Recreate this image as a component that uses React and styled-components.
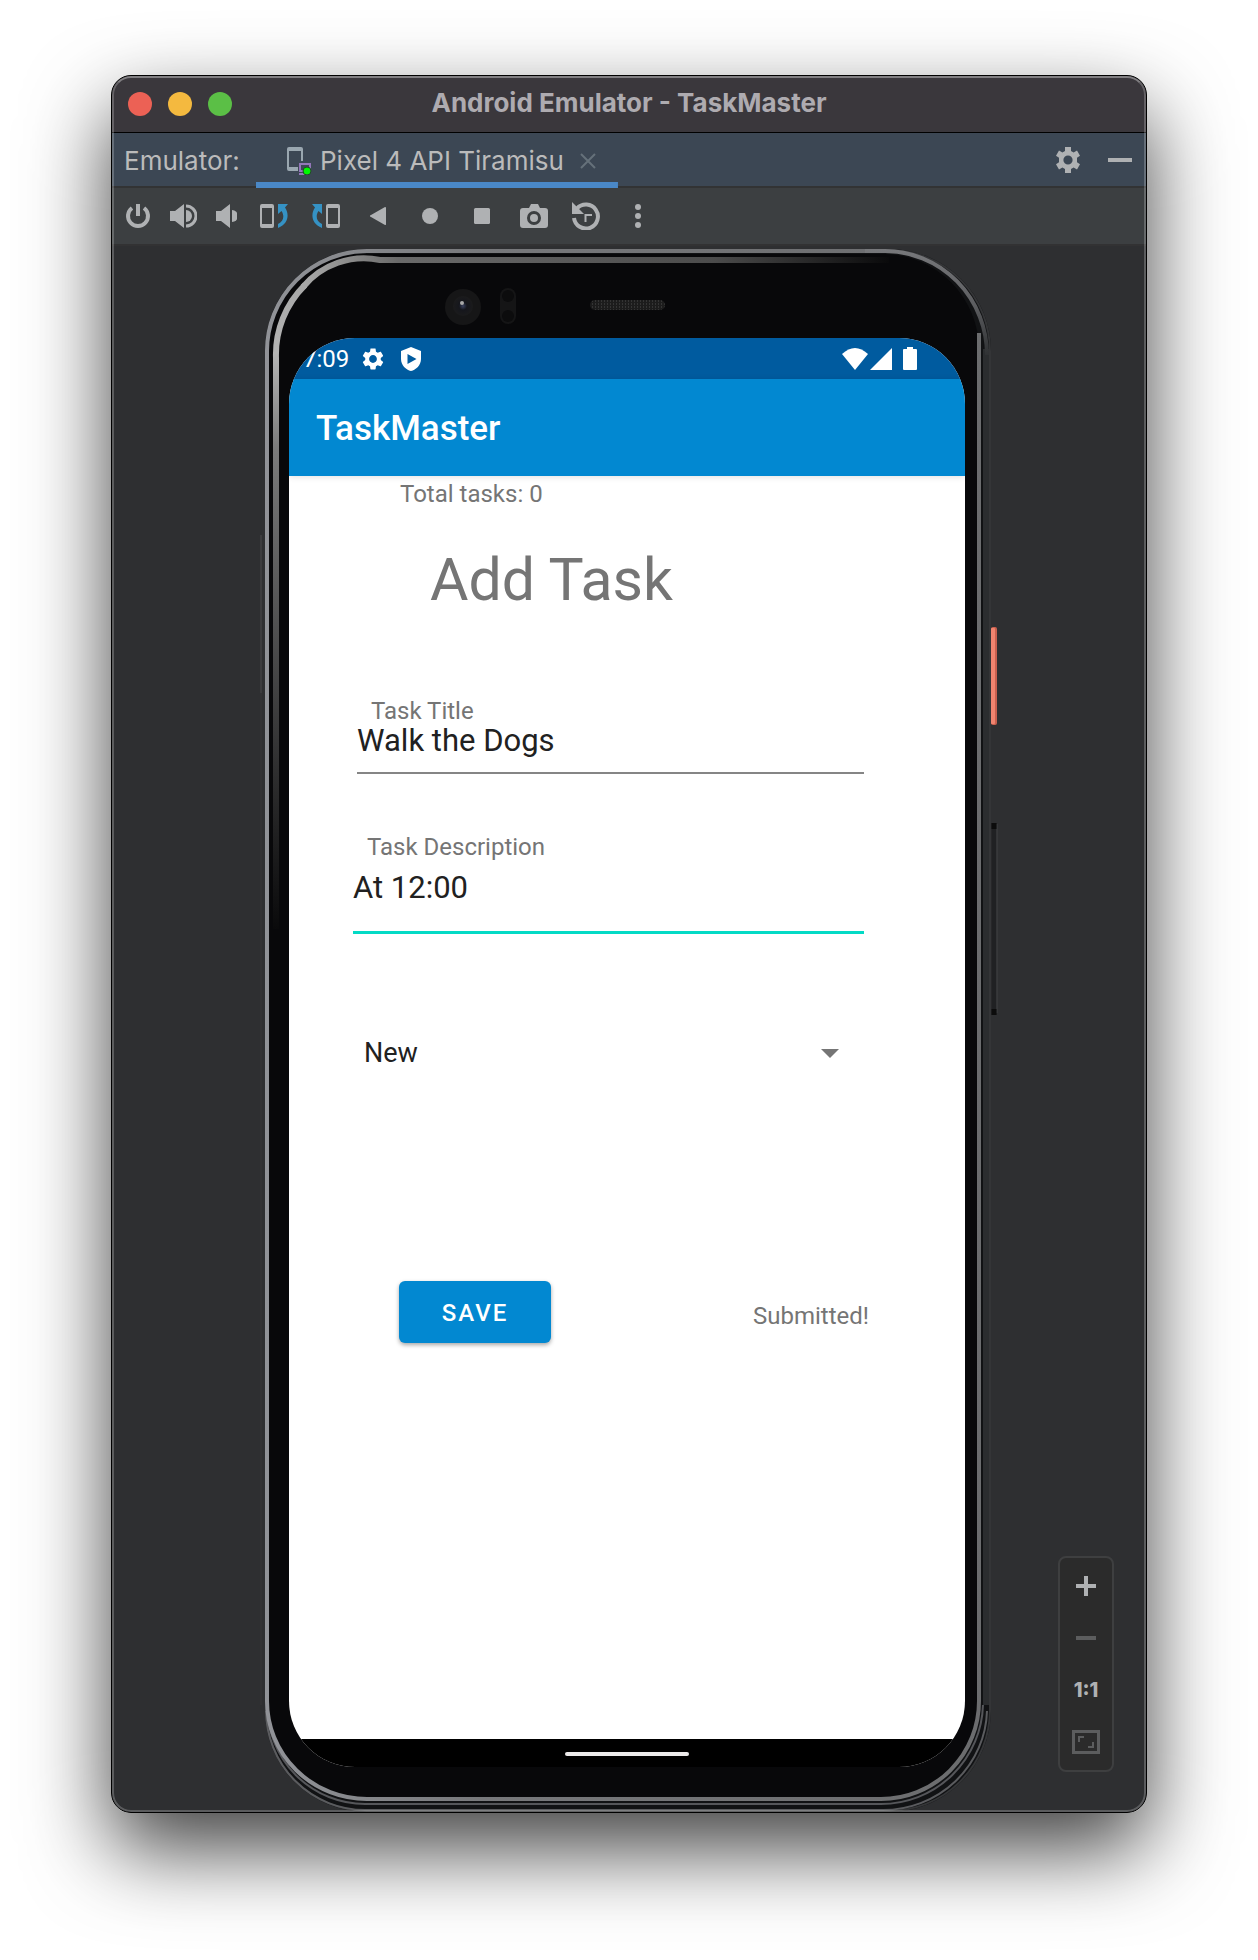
import React from "react";
import styled, { createGlobalStyle } from "styled-components";

const GlobalStyle = createGlobalStyle`
  *, *::before, *::after { box-sizing: border-box; }
  body { margin: 0; background: #fff; font-family: Inter, "Liberation Sans", sans-serif; }
  button, input, select { font: inherit; color: inherit; }
`;

const Desktop = styled.div`
  padding: 75px 111px 147px;
`;

const Window = styled.main`
  position: relative;
  display: flex;
  flex-direction: column;
  border: 1px solid #000;
  border-radius: 20px;
  overflow: hidden;
  background: #2e2f31;
  &::after {
    content: "";
    position: absolute;
    inset: 0;
    border: 2px solid rgba(255, 255, 255, 0.22);
    border-top-color: rgba(255, 255, 255, 0.36);
    border-radius: 19px;
    pointer-events: none;
  }
`;

const Shadow = styled.div`
  border-radius: 20px;
  box-shadow: 0 36px 84px rgba(0, 0, 0, 0.75);
`;

const TitleBar = styled.header`
  display: grid;
  grid-template-columns: 1fr auto 1fr;
  align-items: center;
  height: 57px;
  padding: 0 16px;
  background: #3a373c;
  border-bottom: 1px solid #000;
`;

const Lights = styled.div`
  display: flex;
  gap: 16px;
`;

const Light = styled.button`
  width: 24px;
  height: 24px;
  padding: 0;
  border: 0;
  border-radius: 50%;
  background: ${(p) => p.$color};
`;

const WindowTitle = styled.h1`
  margin: 0;
  padding-bottom: 2px;
  font-size: 26px;
  line-height: 32px;
  font-weight: 700;
  color: #aeabb0;
`;

const TabBar = styled.nav`
  display: flex;
  align-items: stretch;
  height: 55px;
  padding: 0 14px 0 12px;
  background: #3c4754;
  border-bottom: 2px solid #323334;
  color: #bbbbbb;
  font-size: 26px;
  line-height: 55px;
`;

const TabLabel = styled.span`
  width: 132px;
`;

const Tab = styled.div`
  display: flex;
  align-items: center;
  gap: 8px;
  height: 55px;
  padding: 0 14px 0 31px;
  background: linear-gradient(#4a88c7, #4a88c7) bottom / 100% 6px no-repeat;
  svg { flex: none; }
`;

const TabLink = styled.a`
  color: inherit;
  text-decoration: none;
`;

const IconButton = styled.button`
  display: flex;
  align-items: center;
  justify-content: center;
  width: ${(p) => p.$w || 28}px;
  height: 28px;
  padding: 0;
  border: 0;
  background: none;
  color: #afb1b3;
  svg { display: block; flex: none; }
`;

const TabTools = styled.div`
  display: flex;
  align-items: center;
  gap: 26px;
  margin-left: auto;
`;

const Toolbar = styled.div`
  display: flex;
  align-items: center;
  gap: 24px;
  height: 56px;
  padding: 0 12px;
  background: #3c3f41;
`;

const VolumeGroup = styled.div`
  display: flex;
  gap: 15px;
  margin: 0 -3px 0 -8px;
`;

const Stage = styled.section`
  position: relative;
  display: flex;
  justify-content: center;
  padding-top: 3px;
  border-top: 2px solid #323233;
  margin-bottom: -1px;
`;

const Phone = styled.div`
  position: relative;
  width: 728px;
  padding: 89px 28px 46px 24px;
`;

const BezelArt = styled.svg`
  position: absolute;
  inset: 0;
  width: 100%;
  height: 100%;
  overflow: visible;
`;

const Screen = styled.div`
  position: relative;
  display: flex;
  flex-direction: column;
  border-radius: 66px;
  overflow: hidden;
  background: #fff;
  font-family: Roboto, "Liberation Sans", sans-serif;
  color: #757575;
`;

const StatusBar = styled.div`
  display: flex;
  align-items: center;
  height: 41px;
  padding: 0 48px 0 14px;
  background: #005b9f;
  color: #fff;
  font-size: 24px;
  line-height: 24px;
`;

const StatusIcons = styled.div`
  display: flex;
  align-items: center;
  gap: ${(p) => p.$gap}px;
  margin-left: ${(p) => (p.$end ? "auto" : "11px")};
`;

const AppBar = styled.div`
  display: flex;
  align-items: center;
  height: 97px;
  padding: 2px 28px 0 27px;
  background: #0288d1;
  color: #fff;
  box-shadow: 0 1px 6px rgba(0, 0, 0, 0.12);
`;

const AppName = styled.h2`
  margin: 0;
  font-size: 35px;
  line-height: 40px;
  font-weight: 500;
`;

const Form = styled.form`
  display: flex;
  flex-direction: column;
  padding: 6px 96px 396px 64px;
  font-size: 24px;
  line-height: 24px;
`;

const TaskCount = styled.p`
  margin: 0 0 40px 47px;
`;

const Heading = styled.h3`
  margin: 0 0 85px 77px;
  font-size: 59px;
  line-height: 68px;
  font-weight: 400;
`;

const Field = styled.div`
  display: flex;
  flex-direction: column;
  gap: ${(p) => p.$gap || 0}px;
  margin: 0 5px ${(p) => p.$after}px ${(p) => p.$indent || 0}px;
`;

const FieldLabel = styled.label`
  padding-left: 14px;
`;

const TextInput = styled.input`
  width: 100%;
  height: ${(p) => (p.$active ? 64 : 51)}px;
  padding: 0 0 ${(p) => (p.$active ? 27 : 15)}px;
  border: 0;
  border-bottom: ${(p) => (p.$active ? "3px solid #03dac5" : "2px solid #858585")};
  border-radius: 0;
  outline: none;
  background: transparent;
  color: #212121;
  font-size: 31px;
  line-height: 34px;
`;

const SelectWrap = styled.div`
  display: grid;
  align-items: center;
  margin: 0 30px 212px 11px;
  > * { grid-area: 1 / 1; }
  svg { justify-self: end; pointer-events: none; }
`;

const Select = styled.select`
  appearance: none;
  width: 100%;
  height: 32px;
  padding: 0;
  border: 0;
  background: transparent;
  color: #212121;
  font-size: 27px;
  line-height: 32px;
`;

const Actions = styled.div`
  display: flex;
  align-items: flex-end;
  justify-content: space-between;
  padding-left: 46px;
`;

const SaveButton = styled.button`
  width: 152px;
  height: 62px;
  padding: 2px 0 0;
  border: 0;
  border-radius: 6px;
  background: #0288d1;
  box-shadow: 0 2px 4px rgba(0, 0, 0, 0.35);
  color: #fff;
  font-size: 24px;
  font-weight: 500;
  letter-spacing: 2px;
`;

const Result = styled.output`
  padding-bottom: 15px;
`;

const NavBar = styled.div`
  display: flex;
  justify-content: center;
  height: 28px;
  padding-top: 13px;
  background: #000;
`;

const HomeHandle = styled.div`
  width: 124px;
  height: 4px;
  border-radius: 2px;
  background: #eceaea;
`;

const ZoomPanel = styled.div`
  position: absolute;
  right: 32px;
  bottom: 41px;
  display: flex;
  flex-direction: column;
  width: 56px;
  padding: 2px 0;
  border: 2px solid #3e3f40;
  border-radius: 8px;
  background: #2b2b2b;
`;

const ZoomButton = styled.button`
  display: flex;
  align-items: center;
  justify-content: center;
  height: 52px;
  padding: 0;
  border: 0;
  background: none;
  color: ${(p) => (p.$dim ? "#5c5d5e" : "#afb1b3")};
  font-size: 20px;
  font-weight: 800;
`;

const gearPath =
  "M19.14 12.94c.04-.3.06-.61.06-.94 0-.32-.02-.64-.07-.94l2.03-1.58c.18-.14.23-.41.12-.61l-1.92-3.32c-.12-.22-.37-.29-.59-.22l-2.39.96c-.5-.38-1.03-.7-1.62-.94l-.36-2.54c-.04-.24-.24-.41-.48-.41h-3.84c-.24 0-.43.17-.47.41l-.36 2.54c-.59.24-1.13.57-1.62.94l-2.39-.96c-.22-.08-.47 0-.59.22L2.74 8.87c-.12.21-.08.47.12.61l2.03 1.58c-.05.3-.09.63-.09.94s.02.64.07.94l-2.03 1.58c-.18.14-.23.41-.12.61l1.92 3.32c.12.22.37.29.59.22l2.39-.96c.5.38 1.03.7 1.62.94l.36 2.54c.05.24.24.41.48.41h3.84c.24 0 .44-.17.47-.41l.36-2.54c.59-.24 1.13-.56 1.62-.94l2.39.96c.22.08.47 0 .59-.22l1.92-3.32c.12-.22.07-.47-.12-.61l-2.01-1.58zM12 15.6c-1.98 0-3.6-1.62-3.6-3.6s1.62-3.6 3.6-3.6 3.6 1.62 3.6 3.6-1.62 3.6-3.6 3.6z";

function Glyph({ w = 28, h = 28, children }) {
  return (
    <svg width={w} height={h} viewBox={`0 0 ${w} ${h}`} fill="currentColor" aria-hidden="true">
      {children}
    </svg>
  );
}

function ToolGear() {
  return (
    <Glyph w={24} h={26}>
      <path
        fillRule="evenodd"
        d="M9 0h6v4l2.6 1.5L21 3.6l3 5.2-3 2v4.4l3 2-3 5.2-3.4-1.9L15 22v4H9v-4l-2.6-1.5L3 22.400 0 17.200l3-2v-4.400L0 8.800l3-5.200 3.400 1.900L9 4zM12 8.400a4.600 4.600 0 1 0 0 9.200 4.600 4.600 0 0 0 0-9.200z"
      />
    </Glyph>
  );
}

function StatusGear() {
  return (
    <svg width="26" height="26" viewBox="0 0 24 24" fill="#fff" aria-hidden="true">
      <path d={gearPath} />
    </svg>
  );
}

function Bezel() {
  return (
    <BezelArt viewBox="0 0 728 1564" preserveAspectRatio="none" fill="none" aria-hidden="true">
      <defs>
        <linearGradient id="rim" gradientUnits="userSpaceOnUse" x1="0" x2="728" y1="0" y2="0">
          <stop offset="0" stopColor="#919398" />
          <stop offset="0.3" stopColor="#77787b" />
          <stop offset="1" stopColor="#6b6c6e" />
        </linearGradient>
        <linearGradient id="corner" gradientUnits="userSpaceOnUse" x1="0" x2="0" y1="0" y2="110">
          <stop offset="0" stopColor="#77787b" />
          <stop offset="0.5" stopColor="#5d5e61" />
          <stop offset="1" stopColor="#2c2e30" />
        </linearGradient>
        <linearGradient id="chamferTop" gradientUnits="userSpaceOnUse" x1="40" x2="624" y1="0" y2="0">
          <stop offset="0" stopColor="#a8a8a8" />
          <stop offset="0.16" stopColor="#6a6a6a" />
          <stop offset="0.7" stopColor="#4c4c4c" />
          <stop offset="1" stopColor="#0a0a0b" />
        </linearGradient>
        <linearGradient id="chamferSide" gradientUnits="userSpaceOnUse" x1="0" x2="0" y1="40" y2="680">
          <stop offset="0" stopColor="#a8a8a8" />
          <stop offset="0.1" stopColor="#b4b4b4" />
          <stop offset="0.25" stopColor="#7a7a7a" />
          <stop offset="1" stopColor="#0a0a0b" />
        </linearGradient>
        <radialGradient id="lens">
          <stop offset="0" stopColor="#39415f" />
          <stop offset="0.4" stopColor="#15161c" />
          <stop offset="1" stopColor="#1b1b1c" />
        </radialGradient>
        <pattern id="mesh" width="3" height="3" patternUnits="userSpaceOnUse">
          <rect width="3" height="3" fill="#1c1c1c" />
          <rect width="1" height="2" fill="#343434" />
        </pattern>
      </defs>

      <path d="M-4 286V444" stroke="#4b4a4d" />
      <path d="M-4 444V1456" stroke="#373738" />

      <rect x="726" y="378" width="6" height="98" rx="2" fill="#c9604f" />
      <rect x="726" y="379" width="4" height="96" rx="1" fill="#f0846f" />
      <path d="M729 574V766" stroke="#202123" strokeWidth="5" />
      <path d="M732 575V764" stroke="#404244" />
      <path d="M729 574v6M729 760v6" stroke="#0c0c0c" strokeWidth="5" />

      <rect width="726" height="1563" rx="102" fill="#111214" />
      <rect x="1" y="1" width="724" height="1561" rx="101" stroke="#343537" strokeWidth="2" />
      <path d="M721 100V1456" stroke="#2b2d2f" strokeWidth="6" />
      <path d="M2 1456A98 99 0 0 0 100 1555H616A102 102 0 0 0 718 1456" stroke="#55565a" strokeWidth="2" />
      <path d="M1 1462A99 100 0 0 0 100 1561H618A104 102 0 0 0 722 1462" stroke="#5a5b5e" strokeWidth="2" />

      <rect x="4" y="5" width="710" height="1544" rx="96" fill="#08080a" />
      <path
        d="M714 84V1452A98 98 0 0 1 616 1550H102A100 98 0 0 1 2 1452V102A100 100 0 0 1 102 2H600"
        stroke="url(#rim)"
        strokeWidth="4"
      />
      <path d="M600 2H620A102 104 0 0 1 722 106" stroke="url(#corner)" strokeWidth="4" />

      <path d="M624 11H115A79 79 0 0 0 38 38" stroke="url(#chamferTop)" strokeWidth="6" />
      <path d="M40 36A98 98 0 0 0 11 109V680" stroke="url(#chamferSide)" strokeWidth="6" />

      <circle cx="198" cy="58" r="18" fill="#161617" />
      <circle cx="198" cy="57" r="10" fill="url(#lens)" />
      <circle cx="197" cy="54" r="2" fill="#a9a9a9" />
      <rect x="235" y="39" width="16" height="36" rx="8" fill="#151516" />
      <circle cx="243" cy="47" r="6" fill="#0c0c0d" />
      <circle cx="243" cy="67" r="6" fill="#0c0c0d" />
      <rect x="325" y="51" width="75" height="10" rx="5" fill="url(#mesh)" />
    </BezelArt>
  );
}

function RotateArt() {
  return (
    <>
      <path fillRule="evenodd" d="M2 2h10a2 2 0 0 1 2 2v20a2 2 0 0 1-2 2H2a2 2 0 0 1-2-2V4a2 2 0 0 1 2-2zM2 6v16h10V6z" />
      <path fill="#3592c4" d="M18 2h10l-3 3.500c4 5.500 4.500 16-7 20.500v-4c6-3 6.500-8.500 3.500-13L18 12z" />
    </>
  );
}

const tools = [
  {
    label: "Rotate left",
    art: <RotateArt />,
  },
  {
    label: "Rotate right",
    art: (
      <g transform="matrix(-1 0 0 1 28 0)">
        <RotateArt />
      </g>
    ),
  },
  { label: "Back", art: <path d="M22 5.500v17a1 1 0 0 1-1 .5L7 15a1 1 0 0 1 0-2L21 5a1 1 0 0 1 1 .5z" /> },
  { label: "Home", art: <circle cx="14" cy="14" r="8" /> },
  { label: "Overview", art: <rect x="6" y="6" width="16" height="16" rx="1.500" /> },
  {
    label: "Take screenshot",
    art: (
      <>
        <path
          fillRule="evenodd"
          d="M9 6l2-4h7l2 4h5a3 3 0 0 1 3 3v14a3 3 0 0 1-3 3H3a3 3 0 0 1-3-3V9a3 3 0 0 1 3-3zM14 9a7 7 0 1 0 0 14 7 7 0 0 0 0-14z"
        />
        <circle cx="14" cy="16" r="4" />
      </>
    ),
  },
  {
    label: "Snapshots",
    art: (
      <>
        <path d="M5 6.500A12 12 0 1 1 2 16" fill="none" stroke="currentColor" strokeWidth="4" />
        <path d="M0 0l12 12H0z" />
        <path d="M13.500 20v-7H20" fill="none" stroke="currentColor" strokeWidth="2" />
      </>
    ),
  },
  {
    label: "More",
    art: (
      <>
        <circle cx="14" cy="5" r="3" />
        <circle cx="14" cy="14" r="3" />
        <circle cx="14" cy="23" r="3" />
      </>
    ),
  },
];

export default function App() {
  return (
    <Desktop>
      <GlobalStyle />
      <Shadow>
        <Window>
          <TitleBar>
            <Lights>
              <Light type="button" $color="#ec6155" aria-label="Close" />
              <Light type="button" $color="#f4b93f" aria-label="Minimize" />
              <Light type="button" $color="#5bbf46" aria-label="Zoom" />
            </Lights>
            <WindowTitle>Android Emulator - TaskMaster</WindowTitle>
          </TitleBar>

          <TabBar>
            <TabLabel>Emulator:</TabLabel>
            <Tab>
              <Glyph w={25} h={28}>
                <path d="M2 0h12a2 2 0 0 1 2 2v12h-2V4H2v16h9v4H2a2 2 0 0 1-2-2V2a2 2 0 0 1 2-2z" fill="#9aa7b0" />
                <path d="M13 17h10v7H13z" fill="none" stroke="#9376b8" strokeWidth="2" />
                <path d="M12 26h7v2h-7z" fill="#9376b8" />
                <circle cx="20" cy="24" r="4" fill="#00f800" stroke="#24452c" />
              </Glyph>
              <TabLink href="#pixel">Pixel 4 API Tiramisu</TabLink>
              <IconButton type="button" $w={32} aria-label="Close tab">
                <Glyph w={16} h={16}>
                  <path d="M1 1l14 14M15 1L1 15" stroke="#65717a" strokeWidth="2" />
                </Glyph>
              </IconButton>
            </Tab>
            <TabTools>
              <IconButton type="button" aria-label="Settings">
                <ToolGear />
              </IconButton>
              <IconButton type="button" $w={24} aria-label="Hide">
                <Glyph w={24} h={4}>
                  <path d="M0 0h24v4H0z" />
                </Glyph>
              </IconButton>
            </TabTools>
          </TabBar>

          <Toolbar>
            <IconButton type="button" aria-label="Power">
              <Glyph>
                <path d="M12 2h4v12h-4z" />
                <path d="M8 6A10 10 0 1 0 20 6" fill="none" stroke="currentColor" strokeWidth="4" />
              </Glyph>
            </IconButton>
            <VolumeGroup>
              <IconButton type="button" $w={30} aria-label="Volume up">
                <Glyph>
                  <path d="M1 9h5l9-7v24l-9-7H1z" />
                  <path d="M17 8a6 6 0 0 1 0 12z" />
                  <path d="M17 4a10 10 0 0 1 0 20" fill="none" stroke="currentColor" strokeWidth="3" />
                </Glyph>
              </IconButton>
              <IconButton type="button" $w={26} aria-label="Volume down">
                <Glyph w={22}>
                  <path d="M1 9h5l9-7v24l-9-7H1z" />
                  <path d="M17 8a6 6 0 0 1 0 12z" />
                </Glyph>
              </IconButton>
            </VolumeGroup>
            {tools.map((tool) => (
              <IconButton type="button" key={tool.label} aria-label={tool.label}>
                <Glyph>{tool.art}</Glyph>
              </IconButton>
            ))}
          </Toolbar>

          <Stage>
            <Phone>
              <Bezel />
              <Screen>
                <StatusBar>
                  <time>7:09</time>
                  <StatusIcons $gap={15}>
                    <StatusGear />
                    <Glyph w={20} h={24}>
                      <path
                        fill="#fff"
                        fillRule="evenodd"
                        d="M10 0l10 4v8c0 6-5 11-10 12C5 23 0 18 0 12V4zM6.500 7v10l9-5z"
                      />
                    </Glyph>
                  </StatusIcons>
                  <StatusIcons $end $gap={2}>
                    <Glyph w={26} h={22}>
                      <path d="M13 22L0 6q13-12 26 0z" />
                    </Glyph>
                    <Glyph w={31} h={22}>
                      <path d="M22 0v22H0z" />
                    </Glyph>
                    <Glyph w={14} h={23}>
                      <path d="M4 0h6v2h3a1 1 0 0 1 1 1v19a1 1 0 0 1-1 1H1a1 1 0 0 1-1-1V3a1 1 0 0 1 1-1h3z" />
                    </Glyph>
                  </StatusIcons>
                </StatusBar>
                <AppBar>
                  <AppName>TaskMaster</AppName>
                </AppBar>
                <Form onSubmit={(e) => e.preventDefault()}>
                  <TaskCount>Total tasks: 0</TaskCount>
                  <Heading>Add Task</Heading>
                  <Field $indent={4} $after={61}>
                    <FieldLabel htmlFor="title">Task Title</FieldLabel>
                    <TextInput id="title" type="text" defaultValue="Walk the Dogs" />
                  </Field>
                  <Field $gap={11} $after={103}>
                    <FieldLabel htmlFor="description">Task Description</FieldLabel>
                    <TextInput id="description" type="text" defaultValue="At 12:00" $active />
                  </Field>
                  <SelectWrap>
                    <Select aria-label="Task state" defaultValue="New">
                      <option>New</option>
                    </Select>
                    <Glyph w={18} h={9}>
                      <path d="M0 0h18l-9 9z" />
                    </Glyph>
                  </SelectWrap>
                  <Actions>
                    <SaveButton type="submit">SAVE</SaveButton>
                    <Result>Submitted!</Result>
                  </Actions>
                </Form>
                <NavBar>
                  <HomeHandle />
                </NavBar>
              </Screen>
            </Phone>
            <ZoomPanel>
              <ZoomButton type="button" aria-label="Zoom in">
                <Glyph w={20} h={20}>
                  <path d="M8 0h4v8h8v4h-8v8H8v-8H0V8h8z" />
                </Glyph>
              </ZoomButton>
              <ZoomButton type="button" $dim aria-label="Zoom out">
                <Glyph w={20} h={4}>
                  <path d="M0 0h20v4H0z" />
                </Glyph>
              </ZoomButton>
              <ZoomButton type="button">1:1</ZoomButton>
              <ZoomButton type="button" $dim aria-label="Fit to window">
                <Glyph w={28} h={24}>
                  <path fillRule="evenodd" d="M0 0h28v24H0zM3 3v18h22V3z" />
                  <path d="M6 6h6v2H8v4H6zM22 18h-6v-2h4v-4h2z" />
                </Glyph>
              </ZoomButton>
            </ZoomPanel>
          </Stage>
        </Window>
      </Shadow>
    </Desktop>
  );
}
